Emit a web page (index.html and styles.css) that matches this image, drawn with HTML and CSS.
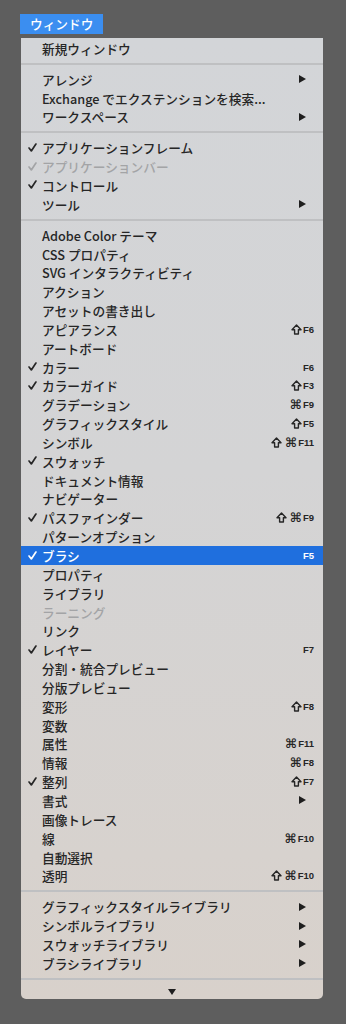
FILE: index.html
```html
<!DOCTYPE html>
<html lang="ja">
<head>
    <meta charset="UTF-8">
    <meta name="viewport" content="width=device-width, initial-scale=1.0">
    <title>ウィンドウ メニュー</title>
    <link rel="stylesheet" href="styles.css">
</head>
<body>
    <div class="menubar">
        <div class="menu-title">ウィンドウ</div>
    </div>

    <svg width="0" height="0" class="defs">
        <symbol id="tick" viewBox="0 0 10 10"><path d="M1.2 5.6 L3.7 8.8 L8.8 1.2" fill="none" stroke="currentColor" stroke-width="1.9" stroke-linecap="round" stroke-linejoin="round"/></symbol>
        <symbol id="shift" viewBox="0 0 11 11"><path d="M5.5 1 L10 5.8 H7.4 V10 H3.6 V5.8 H1 Z" fill="none" stroke="currentColor" stroke-width="1.4" stroke-linejoin="round"/></symbol>
    </svg>

    <div class="menu">
        <div class="item"><span class="check"></span><span class="label">新規ウィンドウ</span></div>
        <div class="sep"></div>

        <div class="item submenu"><span class="check"></span><span class="label">アレンジ</span><span class="arrow"></span></div>
        <div class="item"><span class="check"></span><span class="label">Exchange でエクステンションを検索...</span></div>
        <div class="item submenu"><span class="check"></span><span class="label">ワークスペース</span><span class="arrow"></span></div>
        <div class="sep"></div>

        <div class="item"><span class="check"><svg><use href="#tick"/></svg></span><span class="label">アプリケーションフレーム</span></div>
        <div class="item disabled"><span class="check"><svg><use href="#tick"/></svg></span><span class="label">アプリケーションバー</span></div>
        <div class="item"><span class="check"><svg><use href="#tick"/></svg></span><span class="label">コントロール</span></div>
        <div class="item submenu"><span class="check"></span><span class="label">ツール</span><span class="arrow"></span></div>
        <div class="sep"></div>

        <div class="item"><span class="check"></span><span class="label">Adobe Color テーマ</span></div>
        <div class="item"><span class="check"></span><span class="label">CSS プロパティ</span></div>
        <div class="item"><span class="check"></span><span class="label">SVG インタラクティビティ</span></div>
        <div class="item"><span class="check"></span><span class="label">アクション</span></div>
        <div class="item"><span class="check"></span><span class="label">アセットの書き出し</span></div>
        <div class="item"><span class="check"></span><span class="label">アピアランス</span><span class="key"><svg class="sh"><use href="#shift"/></svg>F6</span></div>
        <div class="item"><span class="check"></span><span class="label">アートボード</span></div>
        <div class="item"><span class="check"><svg><use href="#tick"/></svg></span><span class="label">カラー</span><span class="key">F6</span></div>
        <div class="item"><span class="check"><svg><use href="#tick"/></svg></span><span class="label">カラーガイド</span><span class="key"><svg class="sh"><use href="#shift"/></svg>F3</span></div>
        <div class="item"><span class="check"></span><span class="label">グラデーション</span><span class="key"><i>⌘</i>F9</span></div>
        <div class="item"><span class="check"></span><span class="label">グラフィックスタイル</span><span class="key"><svg class="sh"><use href="#shift"/></svg>F5</span></div>
        <div class="item"><span class="check"></span><span class="label">シンボル</span><span class="key"><svg class="sh gap"><use href="#shift"/></svg><i>⌘</i>F11</span></div>
        <div class="item"><span class="check"><svg><use href="#tick"/></svg></span><span class="label">スウォッチ</span></div>
        <div class="item"><span class="check"></span><span class="label">ドキュメント情報</span></div>
        <div class="item"><span class="check"></span><span class="label">ナビゲーター</span></div>
        <div class="item"><span class="check"><svg><use href="#tick"/></svg></span><span class="label">パスファインダー</span><span class="key"><svg class="sh gap"><use href="#shift"/></svg><i>⌘</i>F9</span></div>
        <div class="item"><span class="check"></span><span class="label">パターンオプション</span></div>
        <div class="item selected"><span class="check"><svg><use href="#tick"/></svg></span><span class="label">ブラシ</span><span class="key">F5</span></div>
        <div class="item"><span class="check"></span><span class="label">プロパティ</span></div>
        <div class="item"><span class="check"></span><span class="label">ライブラリ</span></div>
        <div class="item disabled"><span class="check"></span><span class="label">ラーニング</span></div>
        <div class="item"><span class="check"></span><span class="label">リンク</span></div>
        <div class="item"><span class="check"><svg><use href="#tick"/></svg></span><span class="label">レイヤー</span><span class="key">F7</span></div>
        <div class="item"><span class="check"></span><span class="label">分割・統合プレビュー</span></div>
        <div class="item"><span class="check"></span><span class="label">分版プレビュー</span></div>
        <div class="item"><span class="check"></span><span class="label">変形</span><span class="key"><svg class="sh"><use href="#shift"/></svg>F8</span></div>
        <div class="item"><span class="check"></span><span class="label">変数</span></div>
        <div class="item"><span class="check"></span><span class="label">属性</span><span class="key"><i>⌘</i>F11</span></div>
        <div class="item"><span class="check"></span><span class="label">情報</span><span class="key"><i>⌘</i>F8</span></div>
        <div class="item"><span class="check"><svg><use href="#tick"/></svg></span><span class="label">整列</span><span class="key"><svg class="sh"><use href="#shift"/></svg>F7</span></div>
        <div class="item submenu"><span class="check"></span><span class="label">書式</span><span class="arrow"></span></div>
        <div class="item"><span class="check"></span><span class="label">画像トレース</span></div>
        <div class="item"><span class="check"></span><span class="label">線</span><span class="key"><i>⌘</i>F10</span></div>
        <div class="item"><span class="check"></span><span class="label">自動選択</span></div>
        <div class="item"><span class="check"></span><span class="label">透明</span><span class="key"><svg class="sh gap"><use href="#shift"/></svg><i>⌘</i>F10</span></div>
        <div class="sep"></div>

        <div class="item submenu"><span class="check"></span><span class="label">グラフィックスタイルライブラリ</span><span class="arrow"></span></div>
        <div class="item submenu"><span class="check"></span><span class="label">シンボルライブラリ</span><span class="arrow"></span></div>
        <div class="item submenu"><span class="check"></span><span class="label">スウォッチライブラリ</span><span class="arrow"></span></div>
        <div class="item submenu"><span class="check"></span><span class="label">ブラシライブラリ</span><span class="arrow"></span></div>
        <div class="sep"></div>

        <div class="more"><span class="down"></span></div>
    </div>
</body>
</html>
```

FILE: styles.css
```css
body {
    margin: 0;
    background: #5e5e5e;
    font-family: "Noto Sans CJK JP", "Noto Sans", sans-serif;
    height: 1024px;
    overflow: hidden;
}
.defs {
    position: absolute;
}
.menubar {
    padding: 14px 0 0 20px;
}
.menu-title {
    width: 83px;
    height: 20px;
    line-height: 20px;
    box-sizing: border-box;
    padding-left: 10px;
    background: #3b8ef0;
    color: #fff;
    font-size: 12.7px;
    font-weight: 500;
}
.menu {
    margin: 4px 0 0 21px;
    width: 302px;
    padding-top: 1px;
    background: linear-gradient(#d3d5d8, #d4d4d5 45%, #d7d2ce 85%, #d8d1cb);
    border-radius: 0 0 5px 5px;
    color: #262626;
}
.item {
    display: flex;
    align-items: center;
    height: 18.85px;
    font-size: 12.7px;
    font-weight: 500;
    white-space: nowrap;
}
.check {
    width: 21px;
    height: 10px;
    box-sizing: border-box;
    padding-left: 7px;
    flex-shrink: 0;
    display: flex;
}
.check svg {
    width: 9px;
    height: 9px;
}
.label {
    flex: 1;
}
.key {
    display: flex;
    align-items: center;
    margin-right: 9px;
    font-family: "Liberation Sans", sans-serif;
    font-size: 9.5px;
    font-weight: bold;
}
.key .sh {
    width: 11px;
    height: 11px;
    margin-right: 1px;
}
.key .sh.gap {
    margin-right: 3px;
}
.key i {
    font-style: normal;
    font-family: "DejaVu Sans", sans-serif;
    font-size: 13px;
    font-weight: bold;
    margin-right: 1px;
}
.arrow {
    width: 0;
    height: 0;
    border-left: 7px solid #1e1e1e;
    border-top: 4.5px solid transparent;
    border-bottom: 4.5px solid transparent;
    margin-right: 17px;
}
.disabled {
    color: #a3a4a6;
}
.selected {
    background: #1f6fde;
    color: #fff;
}
.sep {
    height: 12px;
    box-sizing: border-box;
    padding-top: 5px;
}
.sep::after {
    content: "";
    display: block;
    height: 2px;
    background: #bfc0c2;
}
.more {
    height: 14px;
    display: flex;
    justify-content: center;
    align-items: center;
}
.down {
    width: 0;
    height: 0;
    border-top: 6px solid #1e1e1e;
    border-left: 4px solid transparent;
    border-right: 4px solid transparent;
}
```
